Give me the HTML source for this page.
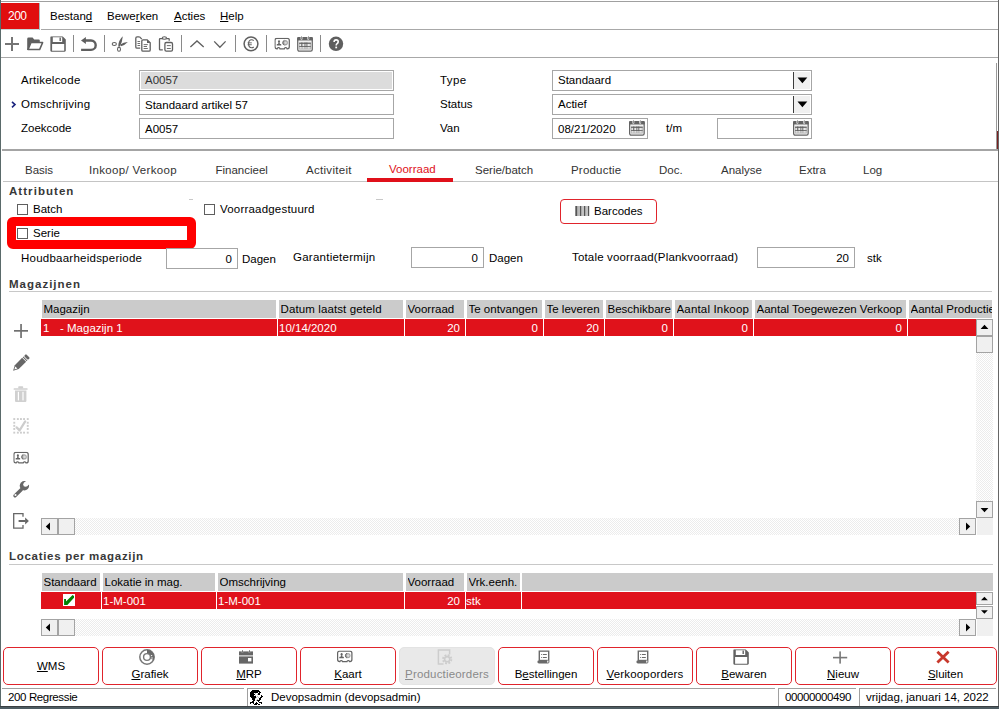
<!DOCTYPE html>
<html><head><meta charset="utf-8">
<style>
*{box-sizing:border-box}
html,body{margin:0;padding:0}
body{width:999px;height:709px;overflow:hidden;position:relative;background:#fff;font-family:"Liberation Sans",sans-serif;font-size:11.5px;color:#000}
.a{position:absolute}
.t{position:absolute;font-size:11.5px;line-height:14px;white-space:nowrap}
.b{position:absolute;font-size:11.5px;line-height:14px;white-space:nowrap;font-weight:bold;color:#383838}
.hl{position:absolute;height:1px;background:#a8a8a8}
.vl{position:absolute;width:1px;background:#a8a8a8}
.inp{position:absolute;border:1px solid #a6a6a6;background:#fff}
.cb{position:absolute;width:11px;height:11px;border:1px solid #5e5e5e;background:#fff}
.sep{position:absolute;width:1px;height:17px;top:35px;background:#8c8c8c}
.ic{position:absolute;overflow:visible}
.gh{position:absolute;background:#cbcbcb;height:18px}
.gb{position:absolute;background:#e0121b;height:17px}
.wt{color:#fff}
.sbb{position:absolute;background:#f0f0f0;border:1px solid #a3a3a3}
.trk{position:absolute;background-color:#fff;background-image:repeating-conic-gradient(#ececec 0 25%,#fff 0 50%);background-size:2px 2px}
.btn{position:absolute;top:647px;height:38px;border:1px solid #e0242c;border-radius:5px;background:#fff}
.u{text-decoration:underline}
</style></head><body>
<svg width="0" height="0" style="position:absolute"><defs>
<symbol id="card" viewBox="0 0 16 12.5">
<path d="M2.6,0.6 H12.9 Q14.9,0.6 14.9,2.6 V9.1 Q14.9,11.1 12.9,11.1 H12.7 Q12.5,10 11.5,10 H11.1 Q10.1,10 9.9,11.1 H5.6 Q5.4,10 4.4,10 H4 Q3,10 2.8,11.1 H2.6 Q0.6,11.1 0.6,9.1 V2.6 Q0.6,0.6 2.6,0.6 Z" fill="none" stroke="#646464" stroke-width="1.25"/>
<ellipse cx="4.6" cy="3.8" rx="1" ry="1.35" fill="#646464"/>
<path d="M4,4.8 H5.2 L5.5,6.3 H6.5 Q6.9,6.3 6.9,6.7 V7.5 Q6.9,7.8 6.5,7.8 H2.7 Q2.3,7.8 2.3,7.5 V6.7 Q2.3,6.3 2.7,6.3 H3.7 Z" fill="#646464"/>
<circle cx="10.8" cy="5.1" r="2.7" fill="#a4a4a4"/>
<circle cx="11.2" cy="5.1" r="1.3" fill="#dadada"/>
<path d="M9.9,2.7 A2.7,2.7 0 0 0 9.9,7.5" fill="none" stroke="#6a6a6a" stroke-width="1"/>
</symbol>
<symbol id="floppy" viewBox="0 0 16 16">
<path d="M1,0 H12.4 L15.6,3.2 V14.4 Q15.6,15.5 14.5,15.5 H1.1 Q0,15.5 0,14.4 V1 Q0,0 1,0 Z M2.6,1 V5.8 H12 V1 Z M1.9,7.8 V14.6 H14 V7.8 Z" fill-rule="evenodd" fill="#626262"/>
<rect x="9.3" y="1.4" width="1.4" height="3.4" fill="#626262"/>
</symbol>
<symbol id="cal" viewBox="0 0 16 16">
<rect x="0.65" y="1.7" width="14.5" height="13.45" rx="1.6" fill="none" stroke="#646464" stroke-width="1.3"/>
<rect x="0" y="1.1" width="15.8" height="3.5" rx="1" fill="#646464"/>
<rect x="3.5" y="0" width="1.8" height="3.7" rx="0.6" fill="#fff"/><rect x="10.3" y="0" width="1.8" height="3.7" rx="0.6" fill="#fff"/>
<rect x="4.1" y="0.3" width="0.7" height="3" fill="#646464"/><rect x="10.9" y="0.3" width="0.7" height="3" fill="#646464"/>
<rect x="2" y="5.8" width="11.8" height="7.8" fill="#b4b4b4"/>
<rect x="2" y="7" width="11.8" height="0.7" fill="#5a5a5a"/><rect x="2" y="10.3" width="11.8" height="0.7" fill="#5a5a5a"/>
<rect x="4.4" y="6.4" width="0.8" height="4.6" fill="#5a5a5a"/><rect x="7.5" y="6.4" width="0.8" height="4.6" fill="#5a5a5a"/><rect x="9.4" y="6.4" width="0.8" height="4.6" fill="#5a5a5a"/>
<g fill="#fff"><rect x="2.7" y="8.3" width="1.2" height="1.4"/><rect x="5.5" y="8.3" width="1.7" height="1.4"/><rect x="8.5" y="8.3" width="0.7" height="1.4"/><rect x="10.5" y="8.3" width="2.2" height="1.4"/>
<rect x="2.7" y="11.4" width="1.8" height="1"/><rect x="5.5" y="11.4" width="1.7" height="1"/><rect x="8.5" y="11.4" width="0.8" height="1"/><rect x="10.5" y="11.4" width="2.2" height="1"/></g>
</symbol>
</defs></svg>
<!-- window frame -->
<div class="a" style="left:0;top:0;width:1px;height:709px;background:#5a6a6a"></div>
<div class="a" style="left:998px;top:0;width:1px;height:709px;background:#666"></div>
<div class="hl" style="left:1px;top:1px;width:997px;background:#a0a0a0"></div>

<div class="a" style="left:996px;top:63px;width:1px;height:86px;background:#9a9a9a"></div>
<div class="a" style="left:997px;top:131px;width:1px;height:18px;background:#7a2020"></div>
<!-- menubar -->
<div class="a" style="left:1px;top:3px;width:38px;height:26px;background:#e10e0e"></div>
<div class="a" style="left:1px;top:29px;width:39px;height:1px;background:#c8d6d6"></div>
<div class="a" style="left:39px;top:3px;width:1px;height:27px;background:#a9b9b9"></div>
<div class="t wt" style="left:8px;top:9px;font-size:12px;letter-spacing:-0.5px">200</div>
<div class="t" style="left:50px;top:9px">Bestan<span class="u">d</span></div>
<div class="t" style="left:107px;top:9px">Bewe<span class="u">r</span>ken</div>
<div class="t" style="left:174px;top:9px"><span class="u">A</span>cties</div>
<div class="t" style="left:220px;top:9px"><span class="u">H</span>elp</div>
<div class="hl" style="left:41px;top:29px;width:957px"></div>

<!-- toolbar -->
<svg class="a" style="left:0;top:30px" width="360" height="27" viewBox="0 30 360 27">
<g fill="#5f5f5f" stroke="#5f5f5f" stroke-width="0">
<rect x="5" y="43" width="14" height="2" fill="#757575"/><rect x="11" y="37" width="2" height="14" fill="#757575"/>
<path d="M27.2,39 Q27.2,37.6 28.6,37.6 H32.6 L34.2,39.4 H38.8 Q39.8,39.4 39.8,40.4 V42.3 H30.8 L28.2,50 H27.2 Z"/>
<path d="M30.9,42.6 H42.6 L39.6,49.6 H28 Z" fill="none" stroke-width="1.5" stroke-linejoin="round"/>
<use href="#floppy" x="50.2" y="36.2" width="16" height="16"/>
<rect x="73" y="35" width="1" height="17" fill="#8a8a8a"/>
<path d="M85,40.45 H91 A4.7,4.7 0 0 1 91,49.85 H81.1" fill="none" stroke-width="2.4"/>
<path d="M81,40.45 L85.9,36.9 V44 Z"/>
<rect x="104" y="35" width="1" height="17" fill="#8a8a8a"/>
<ellipse cx="114.3" cy="44" rx="2.1" ry="1.5" fill="none" stroke-width="1.05"/>
<ellipse cx="119" cy="49.2" rx="1.5" ry="2.1" fill="none" stroke-width="1.05"/>
<path d="M118.3,46.6 Q118.2,40.5 122.8,36.3 Q122.2,42.5 119.9,46.6 Z"/>
<path d="M120.4,44.6 Q123.5,41.9 127.8,42 Q125,45.2 120.8,46.2 Z"/>
<path d="M139.6,36.9 H137.1 Q135.8,36.9 135.8,38.2 V46.9 Q135.8,48.2 137.1,48.2 H140.2 M139.6,36.9 L141.8,39.1" fill="none" stroke-width="1.3"/>
<rect x="137.5" y="41.1" width="2.6" height="0.9"/><rect x="137.5" y="43.1" width="2.6" height="0.9"/><rect x="137.5" y="45" width="2.6" height="0.9"/>
<path d="M143,39.8 H147.2 L150.2,42.8 V50 Q150.2,51.2 149,51.2 H143 Q141.8,51.2 141.8,50 V41 Q141.8,39.8 143,39.8 Z" fill="#fff" stroke-width="1.3"/>
<path d="M147,39.8 V43 H150.2 Z"/>
<rect x="143.6" y="44.2" width="4.2" height="0.9"/><rect x="143.6" y="46.1" width="3.4" height="0.9"/><rect x="143.6" y="48.1" width="4.2" height="0.9"/>
<path d="M162.5,38.6 H160.1 Q159.5,38.6 159.5,39.2 V49.2 Q159.5,49.8 160.1,49.8 H162.8 M166.4,38.6 H168.6 Q169.2,38.6 169.2,39.2 V40.8" fill="none" stroke-width="1.3"/>
<ellipse cx="164.4" cy="38" rx="2.1" ry="1.25" fill="#fff" stroke-width="1.2"/>
<rect x="164.9" y="42.5" width="7.6" height="8.7" rx="1.4" fill="#fff" stroke-width="1.3"/>
<rect x="166.8" y="45.2" width="4" height="0.9"/><rect x="166.8" y="48" width="4" height="0.9"/>
<rect x="181" y="35" width="1" height="17" fill="#8a8a8a"/>
<path d="M190.4,47.1 L197,41 L203.7,47.1" fill="none" stroke-width="1.3"/>
<path d="M214.2,41.4 L219.9,47.3 L225.6,41.4" fill="none" stroke-width="1.3"/>
<rect x="235" y="35" width="1" height="17" fill="#8a8a8a"/>
<circle cx="251" cy="43.8" r="6.9" fill="none" stroke-width="1.5"/>
<path d="M253.7,40.6 Q252.9,39.8 251.7,39.8 Q248.6,39.8 248.6,43.8 Q248.6,47.8 251.7,47.8 Q252.9,47.8 253.7,47" fill="none" stroke-width="1.1"/>
<rect x="247.6" y="42.4" width="4.2" height="0.9"/><rect x="247.6" y="44.3" width="4.2" height="0.9"/>
<rect x="266" y="35" width="1" height="17" fill="#8a8a8a"/>
<use href="#card" x="274.4" y="37.7" width="16" height="12.5"/>
<use href="#cal" x="297.1" y="36" width="16" height="16"/>
<rect x="320" y="35" width="1" height="17" fill="#8a8a8a"/>
<circle cx="336" cy="43.8" r="7.2"/>
<path d="M334.1,42 Q334.1,39.9 336.1,39.9 Q338.2,39.9 338.2,41.8 Q338.2,42.9 337.1,43.6 Q336.2,44.2 336.2,45.4" fill="none" stroke="#fff" stroke-width="1.6"/>
<rect x="335.3" y="46.6" width="1.8" height="1.7" fill="#fff"/>
</g></svg>
<div class="hl" style="left:1px;top:57px;width:997px"></div>

<!-- header form -->
<div class="t" style="left:21px;top:73px;letter-spacing:0.24px">Artikelcode</div>
<svg class="a" style="left:10px;top:100px" width="8" height="9" viewBox="0 0 8 9"><path d="M2,1.8 L5,4.6 L2,7.4" fill="none" stroke="#1a237e" stroke-width="1.6"/></svg>
<div class="t" style="left:21px;top:97px;letter-spacing:0.24px">Omschrijving</div>
<div class="t" style="left:21px;top:121px">Zoekcode</div>
<div class="inp" style="left:139px;top:70px;width:255px;height:21px;background:#dcdcdc;box-shadow:inset 0 0 0 1px #fff"></div>
<div class="t" style="left:145px;top:73px;color:#333">A0057</div>
<div class="inp" style="left:139px;top:94px;width:255px;height:21px"></div>
<div class="t" style="left:145px;top:98px">Standaard artikel 57</div>
<div class="inp" style="left:139px;top:118px;width:255px;height:21px"></div>
<div class="t" style="left:145px;top:122px">A0057</div>
<div class="t" style="left:440px;top:73px;letter-spacing:0.4px">Type</div>
<div class="t" style="left:440px;top:97px">Status</div>
<div class="t" style="left:440px;top:121px">Van</div>
<div class="inp" style="left:552px;top:70px;width:260px;height:21px"></div>
<div class="t" style="left:558px;top:73px">Standaard</div>
<div class="a" style="left:793px;top:72px;width:1px;height:17px;background:#3c3c3c"></div>
<div class="a" style="left:794px;top:72px;width:16px;height:17px;background:#f0f0f0"></div>
<svg class="a" style="left:797px;top:77px" width="11" height="7" viewBox="0 0 11 7"><path d="M0.5,0.6 H10.3 L5.4,6.2 Z" fill="#000"/></svg>
<div class="inp" style="left:552px;top:94px;width:260px;height:21px"></div>
<div class="t" style="left:558px;top:97px">Actief</div>
<div class="a" style="left:793px;top:96px;width:1px;height:17px;background:#3c3c3c"></div>
<div class="a" style="left:794px;top:96px;width:16px;height:17px;background:#f0f0f0"></div>
<svg class="a" style="left:797px;top:101px" width="11" height="7" viewBox="0 0 11 7"><path d="M0.5,0.6 H10.3 L5.4,6.2 Z" fill="#000"/></svg>
<div class="inp" style="left:552px;top:118px;width:96px;height:21px"></div>
<div class="t" style="left:558px;top:122px">08/21/2020</div>
<div class="t" style="left:666px;top:121px">t/m</div>
<div class="inp" style="left:717px;top:118px;width:95px;height:21px"></div>
<svg class="a" style="left:629px;top:120px" width="16" height="16" viewBox="0 0 16 16"><use href="#cal" x="0" y="0" width="16" height="16"/></svg><svg class="a" style="left:793px;top:120px" width="16" height="16" viewBox="0 0 16 16"><use href="#cal" x="0" y="0" width="16" height="16"/></svg>
<div class="a" style="left:2px;top:149px;width:996px;height:2px;background:#a4a4a4"></div>

<!-- tabs -->
<div class="t" style="left:25px;top:163px;color:#333">Basis</div>
<div class="t" style="left:89px;top:163px;color:#333;letter-spacing:0.32px">Inkoop/ Verkoop</div>
<div class="t" style="left:215.5px;top:163px;color:#333">Financieel</div>
<div class="t" style="left:306px;top:163px;color:#333;letter-spacing:0.3px">Activiteit</div>
<div class="t" style="left:389px;top:162px;color:#e0101a">Voorraad</div>
<div class="t" style="left:475px;top:163px;color:#333">Serie/batch</div>
<div class="t" style="left:571px;top:163px;color:#333;letter-spacing:0.2px">Productie</div>
<div class="t" style="left:659px;top:163px;color:#333">Doc.</div>
<div class="t" style="left:721px;top:163px;color:#333">Analyse</div>
<div class="t" style="left:799px;top:163px;color:#333">Extra</div>
<div class="t" style="left:863px;top:163px;color:#333">Log</div>
<div class="hl" style="left:3px;top:181px;width:995px;background:#c4c4c4"></div>
<div class="a" style="left:367px;top:178px;width:86px;height:4px;background:#e0101a"></div>


<!-- attributes -->
<div class="b" style="left:9px;top:184px;letter-spacing:1.05px">Attributen</div>
<div class="cb" style="left:17px;top:204px"></div>
<div class="t" style="left:33px;top:202px">Batch</div>
<div class="cb" style="left:204px;top:204px"></div>
<div class="t" style="left:220px;top:202px;letter-spacing:0.2px">Voorraadgestuurd</div>
<div class="a" style="left:189px;top:199px;width:4px;height:1px;background:#c8c8c8"></div>
<div class="a" style="left:376px;top:199px;width:7px;height:1px;background:#c8c8c8"></div>
<div class="a" style="left:7px;top:217px;width:189px;height:32px;border:9px solid #ff0000;border-radius:6px;background:#fff"></div>
<div class="cb" style="left:17px;top:228px"></div>
<div class="t" style="left:33px;top:226px">Serie</div>
<div class="a" style="left:560px;top:199px;width:97px;height:25px;border:1px solid #e0242c;border-radius:4px"></div>
<svg class="a" style="left:574px;top:206px" width="16" height="11" viewBox="0 0 16 11"><g fill="#555">
<rect x="1" y="0" width="1" height="10" fill="#888"/><rect x="2" y="0" width="1.5" height="10"/><rect x="4.5" y="0" width="1" height="10" fill="#777"/><rect x="6" y="0" width="1.5" height="10"/><rect x="8.5" y="0" width="1" height="10" fill="#888"/><rect x="10" y="0" width="1.5" height="10"/><rect x="12.5" y="0" width="1" height="10" fill="#888"/><rect x="14" y="0" width="1.2" height="10"/>
</g></svg>
<div class="t" style="left:594px;top:204px">Barcodes</div>
<div class="t" style="left:21px;top:251px;letter-spacing:0.24px">Houdbaarheidsperiode</div>
<div class="inp" style="left:166px;top:248px;width:72px;height:21px"></div>
<div class="t" style="left:166px;top:252px;width:66px;text-align:right">0</div>
<div class="t" style="left:242px;top:252px">Dagen</div>
<div class="t" style="left:293px;top:250px;letter-spacing:0.25px">Garantietermijn</div>
<div class="inp" style="left:411px;top:247px;width:73px;height:21px"></div>
<div class="t" style="left:411px;top:251px;width:67px;text-align:right">0</div>
<div class="t" style="left:489px;top:251px">Dagen</div>
<div class="t" style="left:572px;top:250px;letter-spacing:0.17px">Totale voorraad(Plankvoorraad)</div>
<div class="inp" style="left:757px;top:247px;width:98px;height:21px"></div>
<div class="t" style="left:757px;top:251px;width:92px;text-align:right">20</div>
<div class="t" style="left:867px;top:251px">stk</div>


<!-- grid 1 -->
<div class="b" style="left:9px;top:277px;letter-spacing:1px">Magazijnen</div>
<div class="hl" style="left:9px;top:291px;width:983px;background:#c8c8c8"></div>
<div class="gh" style="left:42px;top:300px;width:234px"></div>
<div class="gh" style="left:279px;top:300px;width:124px"></div>
<div class="gh" style="left:406px;top:300px;width:58px"></div>
<div class="gh" style="left:467px;top:300px;width:75px"></div>
<div class="gh" style="left:545px;top:300px;width:58px"></div>
<div class="gh" style="left:606px;top:300px;width:66px"></div>
<div class="gh" style="left:675px;top:300px;width:77px"></div>
<div class="gh" style="left:755px;top:300px;width:151px"></div>
<div class="gh" style="left:909px;top:300px;width:83px"></div>
<div class="gb" style="left:41px;top:319px;width:236px"></div>
<div class="gb" style="left:278px;top:319px;width:126px"></div>
<div class="gb" style="left:405px;top:319px;width:60px"></div>
<div class="gb" style="left:466px;top:319px;width:77px"></div>
<div class="gb" style="left:544px;top:319px;width:60px"></div>
<div class="gb" style="left:605px;top:319px;width:68px"></div>
<div class="gb" style="left:674px;top:319px;width:79px"></div>
<div class="gb" style="left:754px;top:319px;width:153px"></div>
<div class="gb" style="left:908px;top:319px;width:68px"></div>
<div class="t" style="left:43.5px;top:302px;width:232px;overflow:hidden">Magazijn</div>
<div class="t" style="left:280.5px;top:302px;width:122px;overflow:hidden;letter-spacing:0.11px">Datum laatst geteld</div>
<div class="t" style="left:407.5px;top:302px;width:56px;overflow:hidden">Voorraad</div>
<div class="t" style="left:468.5px;top:302px;width:73px;overflow:hidden">Te ontvangen</div>
<div class="t" style="left:546.5px;top:302px;width:56px;overflow:hidden">Te leveren</div>
<div class="t" style="left:607.5px;top:302px;width:64px;overflow:hidden">Beschikbare</div>
<div class="t" style="left:676.5px;top:302px;width:75px;overflow:hidden;letter-spacing:0.17px">Aantal Inkoop</div>
<div class="t" style="left:756.5px;top:302px;width:149px;overflow:hidden">Aantal Toegewezen Verkoop</div>
<div class="t" style="left:910.5px;top:302px;width:81px;overflow:hidden">Aantal Productie</div>
<div class="t wt" style="left:43px;top:321px">1</div>
<div class="t wt" style="left:279px;top:321px">10/14/2020</div>
<div class="t wt" style="left:405px;top:321px;width:55px;text-align:right">20</div>
<div class="t wt" style="left:466px;top:321px;width:72px;text-align:right">0</div>
<div class="t wt" style="left:544px;top:321px;width:55px;text-align:right">20</div>
<div class="t wt" style="left:605px;top:321px;width:63px;text-align:right">0</div>
<div class="t wt" style="left:674px;top:321px;width:74px;text-align:right">0</div>
<div class="t wt" style="left:754px;top:321px;width:148px;text-align:right">0</div>
<div class="t wt" style="left:60px;top:321px">- Magazijn 1</div>
<div class="trk" style="left:976px;top:353px;width:17px;height:148px"></div>
<div class="sbb" style="left:976px;top:319px;width:17px;height:17px"></div>
<svg class="a" style="left:980px;top:324px" width="9" height="6" viewBox="0 0 9 6"><path d="M0.6,5 H8.4 L4.5,0.8 Z" fill="#000"/></svg>
<div class="sbb" style="left:976px;top:336px;width:17px;height:17px"></div>
<div class="sbb" style="left:976px;top:501px;width:17px;height:17px"></div>
<svg class="a" style="left:980px;top:507px" width="9" height="6" viewBox="0 0 9 6"><path d="M0.6,1 H8.4 L4.5,5.2 Z" fill="#000"/></svg>
<div class="a" style="left:977px;top:518px;width:16px;height:17px;background:#f0f0f0"></div>
<div class="trk" style="left:75px;top:518px;width:884px;height:17px"></div>
<div class="sbb" style="left:41px;top:518px;width:17px;height:17px"></div>
<svg class="a" style="left:45px;top:522px" width="6" height="9" viewBox="0 0 6 9"><path d="M5,0.6 V8.4 L0.8,4.5 Z" fill="#000"/></svg>
<div class="sbb" style="left:58px;top:518px;width:17px;height:17px"></div>
<div class="sbb" style="left:959px;top:518px;width:17px;height:17px"></div>
<svg class="a" style="left:965px;top:522px" width="6" height="9" viewBox="0 0 6 9"><path d="M1,0.6 V8.4 L5.2,4.5 Z" fill="#000"/></svg>


<svg class="a" style="left:0;top:318px" width="40" height="215" viewBox="0 318 40 215"><g fill="#676767">
<rect x="14" y="330" width="14" height="1.7" fill="#707070"/><rect x="20.2" y="324" width="1.7" height="14" fill="#707070"/>
<g transform="translate(13.1,370.8) rotate(-45)">
<path d="M0,0 L5.2,-2.8 H15.6 V2.8 H5.2 Z"/>
<path d="M1.8,0 L4.6,-1.5 V1.5 Z" fill="#fff"/>
<rect x="16.4" y="-2.8" width="1" height="5.6"/><rect x="18.2" y="-2.8" width="2.8" height="5.6" rx="1"/>
</g>
<g fill="#d0d0d0">
<rect x="13.6" y="388.2" width="14" height="1.6" rx="0.5"/><rect x="18.2" y="386.2" width="5" height="2.2" rx="0.8"/>
<path d="M15,390.6 H26.4 V401 Q26.4,402 25.4,402 H16 Q15,402 15,401 Z"/>
<rect x="17.8" y="391.8" width="1.2" height="8.6" fill="#fff"/><rect x="22.4" y="391.8" width="1.2" height="8.6" fill="#fff"/>
</g>
<g fill="#cdcdcd">
<rect x="13.3" y="418.1" width="1.9" height="1.9"/><rect x="16.9" y="418.1" width="1.9" height="1.9"/><rect x="20" y="418.1" width="1.9" height="1.9"/><rect x="23.1" y="418.1" width="1.9" height="1.9"/><rect x="26.8" y="418.1" width="1.9" height="1.9"/>
<rect x="13.3" y="431.7" width="1.9" height="1.9"/><rect x="16.9" y="431.7" width="1.9" height="1.9"/><rect x="20" y="431.7" width="1.9" height="1.9"/><rect x="23.1" y="431.7" width="1.9" height="1.9"/><rect x="26.8" y="431.7" width="1.9" height="1.9"/>
<rect x="13.3" y="421.8" width="1.9" height="1.9"/><rect x="13.3" y="424.9" width="1.9" height="1.9"/><rect x="13.3" y="428" width="1.9" height="1.9"/>
<rect x="26.8" y="421.8" width="1.9" height="1.9"/><rect x="26.8" y="424.9" width="1.9" height="1.9"/><rect x="26.8" y="428" width="1.9" height="1.9"/>
<path d="M16.6,427.4 L19.6,430.4 L25.2,421.4" fill="none" stroke="#cdcdcd" stroke-width="2.2" stroke-linecap="round" stroke-linejoin="round"/>
</g>
<use href="#card" x="13.3" y="451.8" width="16" height="12.5"/>
<circle cx="24.4" cy="485.8" r="4.7"/>
<circle cx="25.5" cy="484.5" r="2.3" fill="#fff"/>
<rect x="0" y="-2.3" width="7" height="4.6" fill="#fff" transform="translate(25.5,484.5) rotate(-40)"/>
<path d="M21.4,489.5 L15,495.8" stroke="#676767" stroke-width="3.4" stroke-linecap="round"/>
<circle cx="15.5" cy="495" r="1.05" fill="#fff"/>
<path d="M23,516.7 V513.7 H13.7 V528.2 H23 V525.1" fill="none" stroke="#676767" stroke-width="1.3"/>
<rect x="18.6" y="520" width="7" height="2"/>
<path d="M25.1,517.6 L28.9,521 L25.1,524.4 Z"/>
</g></svg>
<!-- grid 2 -->
<div class="b" style="left:9px;top:549px;letter-spacing:0.7px">Locaties per magazijn</div>
<div class="hl" style="left:9px;top:564px;width:984px;background:#c8c8c8"></div>
<div class="gh" style="left:42px;top:573px;width:58px"></div>
<div class="gh" style="left:103px;top:573px;width:112px"></div>
<div class="gh" style="left:218px;top:573px;width:185px"></div>
<div class="gh" style="left:406px;top:573px;width:58px"></div>
<div class="gh" style="left:467px;top:573px;width:53px"></div>
<div class="gh" style="left:522px;top:573px;width:471px"></div>
<div class="gb" style="left:41px;top:592px;width:60px"></div>
<div class="gb" style="left:102px;top:592px;width:114px"></div>
<div class="gb" style="left:217px;top:592px;width:187px"></div>
<div class="gb" style="left:405px;top:592px;width:60px"></div>
<div class="gb" style="left:466px;top:592px;width:55px"></div>
<div class="gb" style="left:522px;top:592px;width:454px"></div>
<div class="t" style="left:43.5px;top:575px;width:56px;overflow:hidden">Standaard</div>
<div class="t" style="left:104.5px;top:575px;width:110px;overflow:hidden">Lokatie in mag.</div>
<div class="t" style="left:219.5px;top:575px;width:183px;overflow:hidden">Omschrijving</div>
<div class="t" style="left:407.5px;top:575px;width:56px;overflow:hidden">Voorraad</div>
<div class="t" style="left:468.5px;top:575px;width:51px;overflow:hidden">Vrk.eenh.</div>
<div class="t wt" style="left:103px;top:594px">1-M-001</div>
<div class="t wt" style="left:218px;top:594px">1-M-001</div>
<div class="t wt" style="left:405px;top:594px;width:55px;text-align:right">20</div>
<div class="t wt" style="left:466px;top:594px">stk</div>
<div class="a" style="left:63px;top:594px;width:12px;height:12px;background:#fff"></div>
<svg class="a" style="left:60px;top:591px" width="18" height="18" viewBox="60 591 18 18"><path d="M64.1,599.1 H66 V601.5 L72.6,595 L74,595.9 V597.8 L67.4,604.9 H64.1 Z" fill="#008200"/></svg>
<div class="trk" style="left:976px;top:619px;width:17px;height:0px"></div>
<div class="sbb" style="left:976px;top:592px;width:17px;height:13px"></div>
<svg class="a" style="left:980px;top:596px" width="9" height="6" viewBox="0 0 9 6"><path d="M1,4.3 H7.8 L4.4,0.8 Z" fill="#000"/></svg>
<div class="sbb" style="left:976px;top:606px;width:17px;height:13px"></div>
<svg class="a" style="left:980px;top:609px" width="9" height="6" viewBox="0 0 9 6"><path d="M1,1.2 H7.8 L4.4,4.7 Z" fill="#000"/></svg>
<div class="a" style="left:977px;top:619px;width:16px;height:17px;background:#f0f0f0"></div>
<div class="trk" style="left:75px;top:619px;width:884px;height:17px"></div>
<div class="sbb" style="left:41px;top:619px;width:17px;height:17px"></div>
<svg class="a" style="left:45px;top:623px" width="6" height="9" viewBox="0 0 6 9"><path d="M5,0.6 V8.4 L0.8,4.5 Z" fill="#000"/></svg>
<div class="sbb" style="left:58px;top:619px;width:17px;height:17px"></div>
<div class="sbb" style="left:959px;top:619px;width:17px;height:17px"></div>
<svg class="a" style="left:965px;top:623px" width="6" height="9" viewBox="0 0 6 9"><path d="M1,0.6 V8.4 L5.2,4.5 Z" fill="#000"/></svg>


<!-- buttons -->
<div class="btn" style="left:3px;width:96px"></div>
<div class="t" style="left:3px;top:659px;width:96px;text-align:center"><span class=u>W</span>MS</div>
<div class="btn" style="left:102px;width:96px"></div>
<div class="t" style="left:102px;top:667px;width:96px;text-align:center"><span class=u>G</span>rafiek</div>
<div class="btn" style="left:201px;width:96px"></div>
<div class="t" style="left:201px;top:667px;width:96px;text-align:center"><span class=u>M</span>RP</div>
<div class="btn" style="left:300px;width:96px"></div>
<div class="t" style="left:300px;top:667px;width:96px;text-align:center"><span class=u>K</span>aart</div>
<div class="btn" style="left:399px;width:96px;background:#e9e9e9;border-color:#e3e3e3"></div>
<div class="t" style="left:399px;top:667px;width:96px;text-align:center;color:#8a8a8a;letter-spacing:0.18px"><span class=u>P</span>roductieorders</div>
<div class="btn" style="left:498px;width:96px"></div>
<div class="t" style="left:498px;top:667px;width:96px;text-align:center">B<span class=u>e</span>stellingen</div>
<div class="btn" style="left:597px;width:96px"></div>
<div class="t" style="left:597px;top:667px;width:96px;text-align:center;letter-spacing:0.17px"><span class=u>V</span>erkooporders</div>
<div class="btn" style="left:696px;width:96px"></div>
<div class="t" style="left:696px;top:667px;width:96px;text-align:center"><span class=u>B</span>ewaren</div>
<div class="btn" style="left:795px;width:96px"></div>
<div class="t" style="left:795px;top:667px;width:96px;text-align:center"><span class=u>N</span>ieuw</div>
<div class="btn" style="left:894px;width:103px"></div>
<div class="t" style="left:894px;top:667px;width:103px;text-align:center"><span class=u>S</span>luiten</div>
<svg class="a" style="left:0;top:645px" width="999" height="22" viewBox="0 645 999 22">
<g fill="#666">
<circle cx="147" cy="657" r="7.2" fill="none" stroke="#777" stroke-width="1.5"/>
<path d="M147,649.8 A7.2,7.2 0 0 1 153.6,659.9 L150.2,658.4 A3.6,3.6 0 0 0 147,653.4 Z" fill="#6a6a6a"/>
<circle cx="147" cy="657" r="3.4" fill="none" stroke="#777" stroke-width="1.4"/>
<circle cx="151.6" cy="655.6" r="0.7" fill="#fff"/><circle cx="152" cy="658" r="0.7" fill="#fff"/>
<rect x="239" y="651.4" width="14" height="4"/>
<rect x="239" y="656.4" width="14" height="7.2"/>
<rect x="241.8" y="649.8" width="1.3" height="3" fill="#fff"/><rect x="248.8" y="649.8" width="1.3" height="3" fill="#fff"/>
<rect x="242" y="650.2" width="0.9" height="2.6"/><rect x="249" y="650.2" width="0.9" height="2.6"/>
<rect x="248" y="658" width="3.4" height="3.4" fill="#fff"/>
<use href="#card" x="337" y="650.5" width="16" height="12.5"/>
<g fill="#cdcdcd">
<path d="M443.5,664 H438.4 V650 H449.6 V654.5" fill="none" stroke="#cdcdcd" stroke-width="1.5"/>
<circle cx="447.2" cy="659.2" r="4.2" fill="none" stroke="#cdcdcd" stroke-width="1.8" stroke-dasharray="1.9 1.4"/>
<circle cx="447.2" cy="659.2" r="2.6" fill="none" stroke="#cdcdcd" stroke-width="1.6"/>
</g>
<g id="scroll">
<path d="M538.6,650.4 H549.4 V662 Q549.4,663.4 548,663.4 H539 Q537.4,663.4 537.4,662 Q537.4,660.6 538.6,660.6 Z" fill="#6a6a6a"/>
<rect x="540" y="651.8" width="8" height="8" fill="#fff"/>
<rect x="541.2" y="654" width="1" height="1" fill="#6a6a6a"/><rect x="543" y="654" width="3.8" height="1" fill="#6a6a6a"/>
<rect x="541.2" y="657" width="1" height="1" fill="#6a6a6a"/><rect x="543" y="657" width="3.8" height="1" fill="#6a6a6a"/>
<rect x="547.2" y="660.6" width="1.2" height="2" fill="#fff"/>
</g>
<use href="#scroll" transform="translate(99,0)"/>
<use href="#floppy" x="733.2" y="649.2" width="16" height="16"/>
<rect x="833" y="656.8" width="14.2" height="1.6" fill="#777"/><rect x="839.3" y="651.4" width="1.6" height="12.2" fill="#777"/>
<path d="M938.4,652.8 L947.6,661.6 M947.6,652.8 L938.4,661.6" stroke="#c8382c" stroke-width="2.8" stroke-linecap="square"/>
</g></svg>


<!-- status bar -->
<div class="hl" style="left:2px;top:688px;width:242px;background:#a0a0a0"></div>
<div class="hl" style="left:247px;top:688px;width:528px;background:#a0a0a0"></div>
<div class="vl" style="left:247px;top:688px;height:18px;background:#a0a0a0"></div>
<div class="hl" style="left:778px;top:688px;width:78px;background:#a0a0a0"></div>
<div class="vl" style="left:778px;top:688px;height:18px;background:#a0a0a0"></div>
<div class="hl" style="left:859px;top:688px;width:137px;background:#a0a0a0"></div>
<div class="vl" style="left:859px;top:688px;height:18px;background:#a0a0a0"></div>
<div class="t" style="left:8px;top:690px;letter-spacing:-0.37px">200 Regressie</div>
<svg class="a" style="left:247px;top:688px" width="18" height="18" viewBox="0 0 18 18" shape-rendering="crispEdges"><g fill="#000"><rect x="5" y="2" width="7" height="1"/><rect x="4" y="3" width="9" height="1"/><rect x="3" y="4" width="8" height="1"/><rect x="12" y="4" width="2" height="1"/><rect x="3" y="5" width="4" height="1"/><rect x="11" y="5" width="2" height="1"/><rect x="3" y="6" width="5" height="1"/><rect x="11" y="6" width="2" height="1"/><rect x="3" y="7" width="4" height="1"/><rect x="14" y="7" width="1" height="1"/><rect x="3" y="8" width="6" height="1"/><rect x="14" y="8" width="2" height="1"/><rect x="4" y="9" width="5" height="1"/><rect x="13" y="9" width="2" height="1"/><rect x="5" y="10" width="3" height="1"/><rect x="12" y="10" width="2" height="1"/><rect x="5" y="11" width="3" height="1"/><rect x="12" y="11" width="2" height="1"/><rect x="6" y="12" width="2" height="1"/><rect x="9" y="12" width="4" height="1"/><rect x="5" y="13" width="2" height="1"/><rect x="11" y="13" width="1" height="1"/><rect x="3" y="14" width="4" height="1"/><rect x="9" y="14" width="1" height="1"/><rect x="12" y="14" width="3" height="1"/><rect x="3" y="15" width="1" height="1"/><rect x="6" y="15" width="1" height="1"/><rect x="8" y="15" width="3" height="1"/><rect x="14" y="15" width="1" height="1"/><rect x="7" y="16" width="3" height="1"/><rect x="11" y="16" width="2" height="1"/><rect x="8" y="5" width="1" height="1" fill="#bbb"/><rect x="10" y="6" width="1" height="1" fill="#bbb"/><rect x="8" y="7" width="1" height="1" fill="#bbb"/><rect x="10" y="8" width="1" height="1" fill="#bbb"/><rect x="9" y="9" width="1" height="1" fill="#bbb"/><rect x="11" y="9" width="1" height="1" fill="#bbb"/><rect x="8" y="10" width="1" height="1" fill="#bbb"/><rect x="10" y="11" width="1" height="1" fill="#bbb"/><rect x="9" y="12" width="1" height="1" fill="#bbb"/></g></svg>
<div class="t" style="left:271px;top:690px">Devopsadmin (devopsadmin)</div>
<div class="t" style="left:785px;top:690px;letter-spacing:-0.4px">00000000490</div>
<div class="t" style="left:866px;top:690px">vrijdag, januari 14, 2022</div>
<div class="a" style="left:0;top:706px;width:999px;height:1px;background:#3a3f42"></div>
<div class="a" style="left:0;top:707px;width:999px;height:2px;background:#4e5c62"></div>

</body></html>
